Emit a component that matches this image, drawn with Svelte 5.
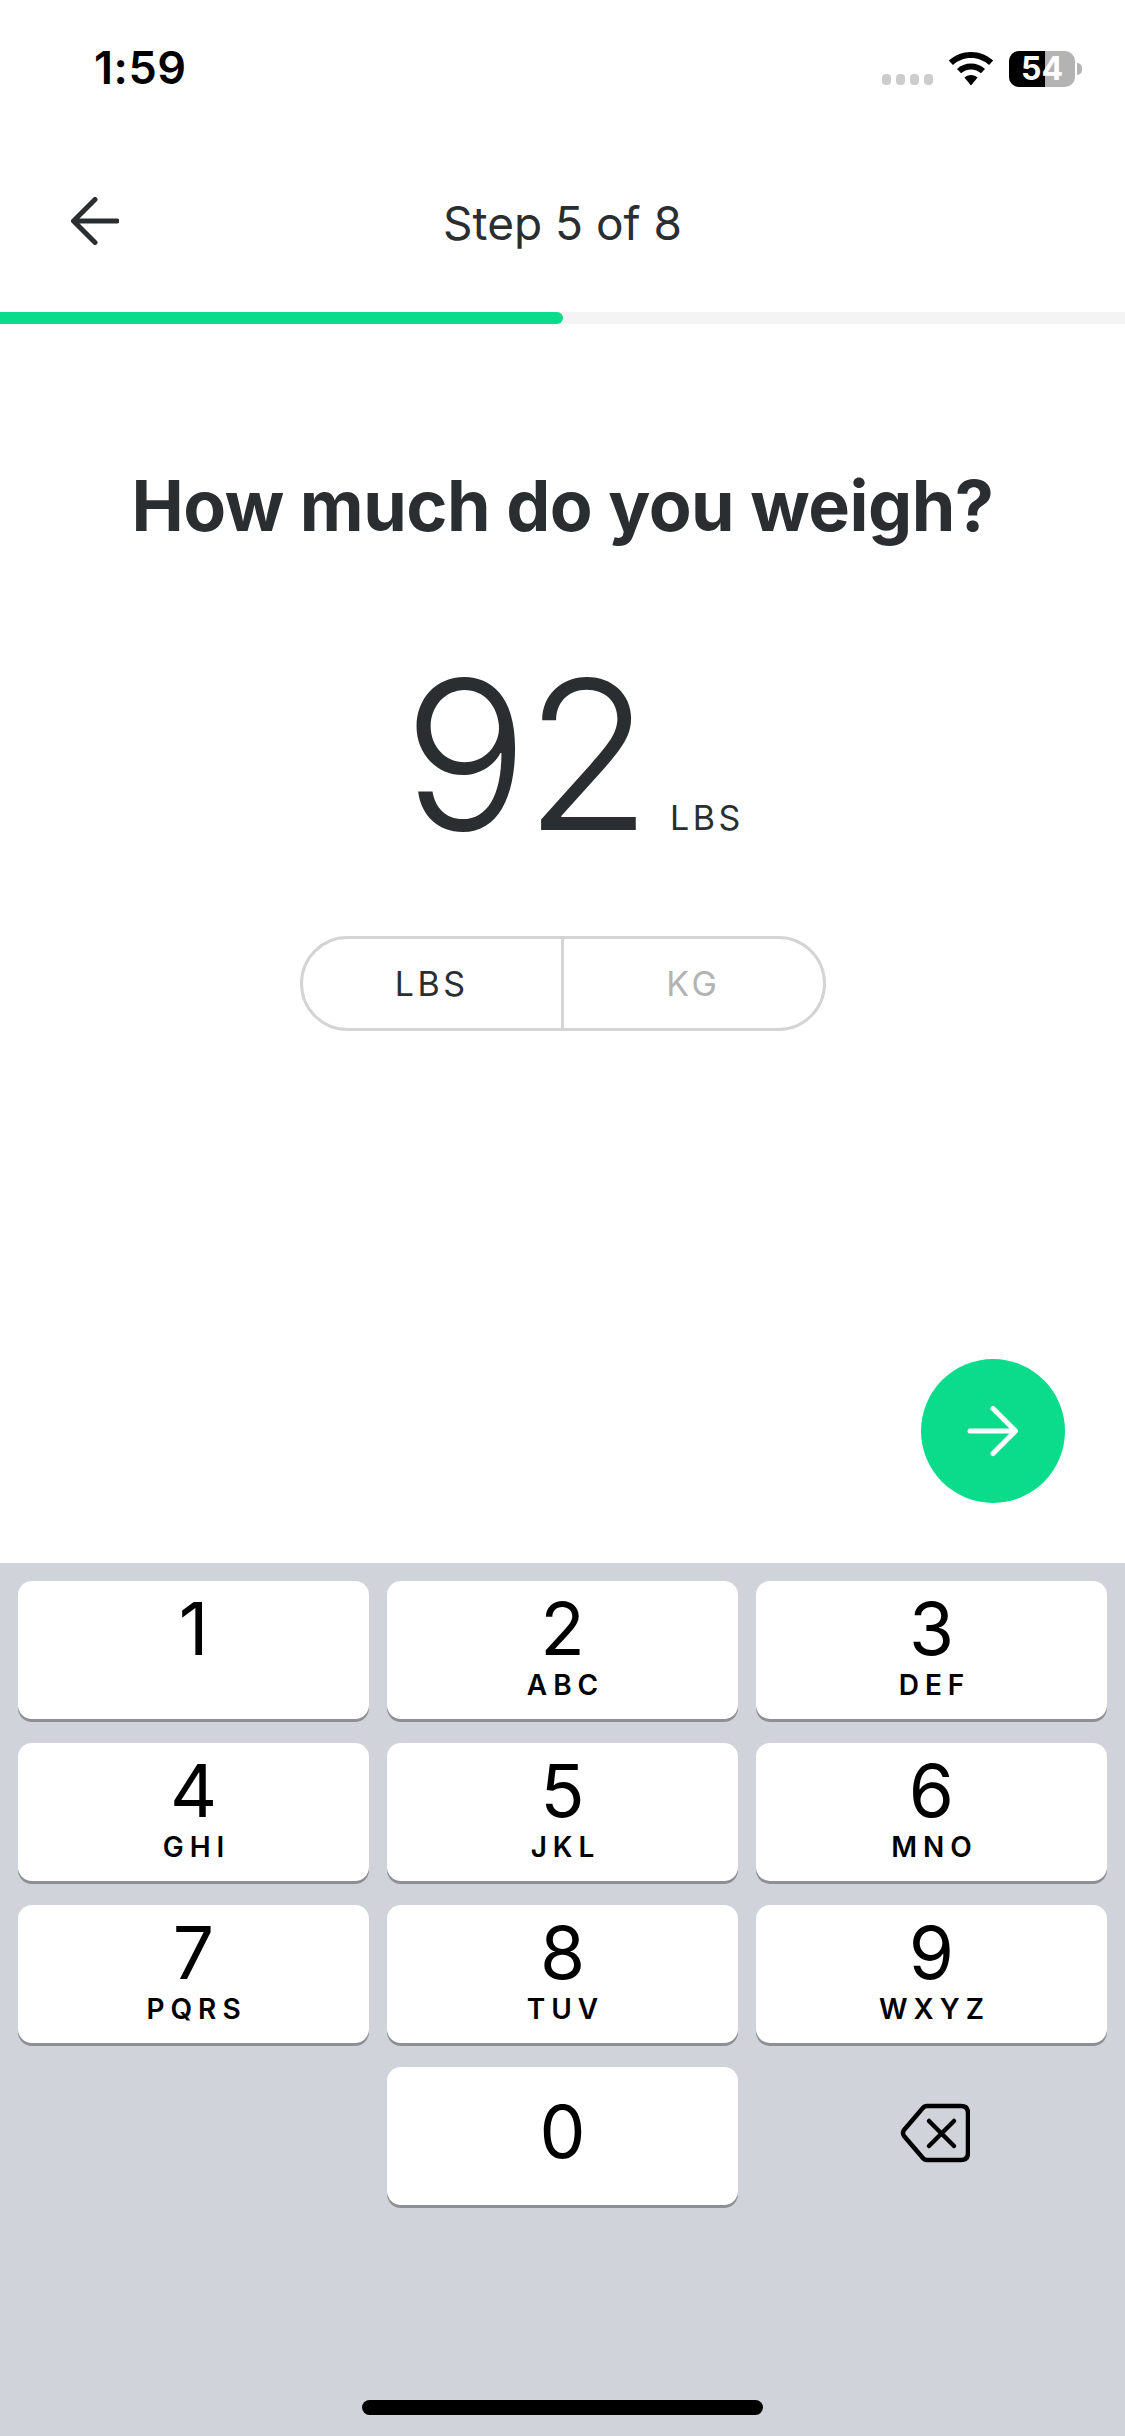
<script>
  const keys = [
    { n: "1", l: "" },
    { n: "2", l: "ABC" },
    { n: "3", l: "DEF" },
    { n: "4", l: "GHI" },
    { n: "5", l: "JKL" },
    { n: "6", l: "MNO" },
    { n: "7", l: "PQRS" },
    { n: "8", l: "TUV" },
    { n: "9", l: "WXYZ" }
  ];
</script>

<div class="phone">
  <div class="status">
    <span class="time">1:59</span>
    <div class="status-right">
      <div class="dots"><i></i><i></i><i></i><i></i></div>
      <svg class="wifi" width="46" height="34" viewBox="0 0 46 34">
        <path d="M23 0C14.5 0 6.7 3.2 0.8 8.6L4.9 13C9.7 8.7 16 6 23 6s13.3 2.7 18.1 7l4.1-4.4C39.3 3.2 31.5 0 23 0z" />
        <path d="M23 11.5c-5.4 0-10.3 2-14 5.4l4.1 4.4c2.6-2.3 6.1-3.8 9.9-3.8s7.300 1.500 9.900 3.800l4.100-4.400c-3.700-3.400-8.600-5.400-14-5.400z" />
        <path d="M23 23c-2.500 0-4.900 1-6.600 2.600L23 33.500l6.600-7.900C27.900 24 25.500 23 23 23z" />
      </svg>
      <div class="battery">
        <div class="fill"></div>
        <span>54</span>
      </div>
      <div class="nub"></div>
    </div>
  </div>

  <div class="topbar">
    <svg class="back" width="48" height="48" viewBox="0 0 48 48" fill="none" stroke="#2b2e31" stroke-width="5" stroke-linecap="round" stroke-linejoin="round">
      <path d="M46 24H3M24 2.500L2.500 24 24 45.500" />
    </svg>
    <span class="step">Step 5 of 8</span>
  </div>
  <div class="progress"><div class="progress-fill" style="width: {(5 / 8) * 80}%"></div></div>

  <div class="main">
    <h1>How much do you weigh?</h1>
    <div class="value">
      <span class="num">92</span>
      <span class="unit">LBS</span>
    </div>
    <div class="toggle">
      <div class="opt active">LBS</div>
      <div class="opt">KG</div>
    </div>
    <div class="fab-row">
      <div class="fab">
        <svg width="52" height="52" viewBox="0 0 52 52" fill="none" stroke="#fff" stroke-width="5" stroke-linecap="round" stroke-linejoin="round">
          <path d="M3 26H48M26 3.500L48.500 26 26 48.500" />
        </svg>
      </div>
    </div>
  </div>

  <div class="keyboard">
    <div class="grid">
      {#each keys as k (k.n)}
        <div class="key">
          <span class="digit">{k.n}</span>
          {#if k.l}<span class="letters">{k.l}</span>{/if}
        </div>
      {/each}
      <div class="blank"></div>
      <div class="key zero"><span class="digit">0</span></div>
      <div class="blank del">
        <svg width="70" height="60" viewBox="0 0 70 60" fill="none" stroke="#000" stroke-width="4.500" stroke-linecap="round" stroke-linejoin="round">
          <path d="M27 3H61Q68 3 68 10V50Q68 57 61 57H27Q24 57 22 54L4 33Q2 30 4 27L22 6Q24 3 27 3Z" />
          <path d="M29 18L54 43M54 18L29 43" />
        </svg>
      </div>
    </div>
    <div class="home"></div>
  </div>
</div>

<style>
  :global(body) {
    margin: 0;
    background: #fff;
  }
  .phone {
    width: 1125px;
    height: 2436px;
    display: flex;
    flex-direction: column;
    font-family: Inter, "Liberation Sans", sans-serif;
    color: #2b2e31;
    overflow: hidden;
  }
  .status {
    height: 135px;
    display: flex;
    justify-content: space-between;
    padding: 44px 43px 0 94px;
    box-sizing: border-box;
    color: #000;
  }
  .time {
    font-size: 45px;
    font-weight: 600;
    line-height: 48px;
    letter-spacing: 0.5px;
  }
  .status-right {
    display: flex;
    align-items: flex-start;
    padding-top: 7px;
  }
  .dots {
    display: flex;
    gap: 5px;
    margin: 23px 15px 0 0;
  }
  .dots i {
    width: 9px;
    height: 11px;
    border-radius: 4px;
    background: #cccccc;
  }
  .wifi {
    fill: #000;
    margin: 1px 15px 0 0;
  }
  .battery {
    position: relative;
    width: 66px;
    height: 36px;
    border-radius: 10px;
    background: #b3b3b3;
    overflow: hidden;
    text-align: center;
    color: #fff;
    font-size: 32px;
    font-weight: 700;
    line-height: 36px;
  }
  .fill {
    position: absolute;
    left: 0;
    top: 0;
    bottom: 0;
    width: 36px;
    background: #000;
  }
  .battery span {
    position: relative;
  }
  .nub {
    width: 5px;
    height: 12px;
    margin: 12px 0 0 2px;
    border-radius: 0 6px 6px 0;
    background: #b3b3b3;
  }
  .topbar {
    height: 177px;
    position: relative;
    display: flex;
    align-items: center;
    justify-content: center;
    padding-bottom: 2px;
    box-sizing: border-box;
  }
  .back {
    position: absolute;
    left: 71px;
    top: 62px;
  }
  .step {
    font-size: 46px;
    font-weight: 400;
    line-height: 56px;
  }
  .progress {
    height: 12px;
    background: #f4f4f4;
  }
  .progress-fill {
    height: 100%;
    background: #0bdc8c;
    border-radius: 0 6px 6px 0;
  }
  .main {
    flex: 1;
    display: flex;
    flex-direction: column;
    align-items: center;
  }
  h1 {
    margin: 140px 0 0;
    font-size: 70px;
    font-weight: 700;
    line-height: 84px;
    letter-spacing: -0.5px;
    white-space: nowrap;
  }
  .value {
    margin-top: 86px;
    display: flex;
    align-items: baseline;
    gap: 22px;
    margin-left: 22px;
  }
  .num {
    font-size: 208px;
    font-weight: 300;
    line-height: 240px;
    letter-spacing: -4px;
  }
  .unit {
    font-size: 34px;
    line-height: 40px;
    letter-spacing: 3.500px;
  }
  .toggle {
    margin-top: 62px;
    width: 526px;
    height: 95px;
    box-sizing: border-box;
    display: flex;
    border: 3px solid #d4d4d4;
    border-radius: 48px;
  }
  .opt {
    flex: 1;
    display: flex;
    align-items: center;
    justify-content: center;
    font-size: 34px;
    letter-spacing: 3.500px;
    color: #b3b3b3;
  }
  .opt.active {
    color: #2b2e31;
    border-right: 3px solid #d4d4d4;
  }
  .fab-row {
    margin-top: auto;
    align-self: stretch;
    display: flex;
    justify-content: flex-end;
    padding: 0 60px 60px 0;
  }
  .fab {
    width: 144px;
    height: 144px;
    border-radius: 50%;
    background: #0bdc8c;
    display: flex;
    align-items: center;
    justify-content: center;
  }
  .keyboard {
    height: 873px;
    box-sizing: border-box;
    background: #d0d3d9;
    padding: 18px 18px 0;
  }
  .grid {
    display: grid;
    grid-template-columns: repeat(3, 351px);
    grid-auto-rows: 138px;
    column-gap: 18px;
    row-gap: 24px;
  }
  .key {
    background: #fff;
    border-radius: 14px;
    box-shadow: 0 3px 0 #8d8f94;
    display: flex;
    flex-direction: column;
    align-items: center;
    color: #000;
  }
  .digit {
    margin-top: 9px;
    font-size: 73px;
    line-height: 78px;
    font-weight: 400;
  }
  .letters {
    margin-top: 0;
    font-size: 28px;
    font-weight: 600;
    line-height: 34px;
    letter-spacing: 6px;
    padding-left: 6px;
  }
  .zero .digit {
    margin-top: 26px;
  }
  .del {
    display: flex;
    align-items: center;
    justify-content: center;
    padding: 0 0 6px 6px;
  }
  .home {
    width: 401px;
    height: 15px;
    margin: 195px auto 0;
    border-radius: 8px;
    background: #000;
  }
</style>
